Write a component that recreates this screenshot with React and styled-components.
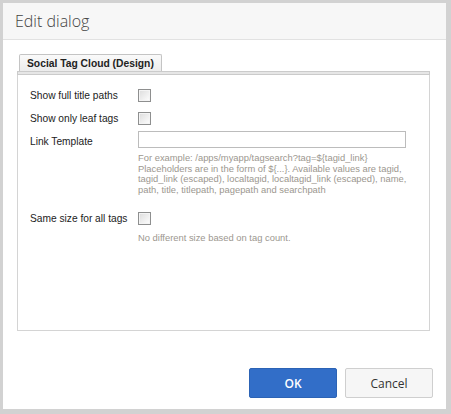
import styled, { createGlobalStyle } from "styled-components"

const GlobalStyle = createGlobalStyle`
  html, body {
    margin: 0;
    padding: 0;
    background: #fff;
  }
  body {
    font-family: "Liberation Sans", Arial, sans-serif;
    font-size: 10px;
    color: #222;
  }
`

const linkHelp = [
  "For example: /apps/myapp/tagsearch?tag=${tagid_link}",
  "Placeholders are in the form of ${...}. Available values are tagid,",
  "tagid_link (escaped), localtagid, localtagid_link (escaped), name,",
  "path, title, titlepath, pagepath and searchpath",
]

export default function App() {
  return (
    <>
      <GlobalStyle />
      <Frame>
        <Header>
          <Title>Edit dialog</Title>
        </Header>
        <Body>
          <Tab>Social Tag Cloud (Design)</Tab>
          <TabStrip />
          <Panel>
            <Row>
              <Label>Show full title paths</Label>
              <Field>
                <Checkbox />
              </Field>
            </Row>
            <Row>
              <Label>Show only leaf tags</Label>
              <Field>
                <Checkbox />
              </Field>
            </Row>
            <Row>
              <Label>Link Template</Label>
              <Field>
                <TextInput />
                <Help>
                  {linkHelp.map(line => (
                    <HelpLine key={line}>{line}</HelpLine>
                  ))}
                </Help>
              </Field>
            </Row>
            <Row>
              <Label>Same size for all tags</Label>
              <Field>
                <Checkbox />
                <Help spaced>
                  <HelpLine>No different size based on tag count.</HelpLine>
                </Help>
              </Field>
            </Row>
          </Panel>
        </Body>
        <Footer>
          <Button primary>OK</Button>
          <Button>Cancel</Button>
        </Footer>
      </Frame>
    </>
  )
}

const Frame = styled.div`
  box-sizing: border-box;
  width: 451px;
  height: 414px;
  border: 3px solid #d2d2d2;
  border-right-width: 5px;
  border-bottom-width: 5px;
  display: flex;
  flex-direction: column;
  background: #fff;
`

const Header = styled.div`
  height: 36px;
  background: #f7f7f7;
  border-bottom: 1px solid #e2e2e2;
  display: flex;
  align-items: center;
  padding-left: 12px;
`

const Title = styled.h1`
  margin: 0;
  font-family: "Open Sans", "Noto Sans", sans-serif;
  font-weight: 300;
  font-size: 16px;
  color: #444;
`

const Body = styled.div`
  padding: 14px 16px 0 14px;
`

const Tab = styled.div`
  display: inline-block;
  box-sizing: border-box;
  height: 17px;
  margin-left: 2px;
  padding: 0 7px;
  border: 1px solid #c4c4c4;
  border-bottom: none;
  border-radius: 2px 2px 0 0;
  background: linear-gradient(#fafafa, #ececec);
  font-weight: bold;
  font-size: 10.3px;
  line-height: 17px;
  color: #222;
  vertical-align: top;
`

const TabStrip = styled.div`
  box-sizing: border-box;
  height: 4px;
  border: 1px solid #cbcbcb;
  background: #e6e6e6;
`

const Panel = styled.div`
  box-sizing: border-box;
  height: 256px;
  border: 1px solid #d4d4d4;
  border-top: none;
  padding: 14px 12px 0 12px;
  display: flex;
  flex-direction: column;
  gap: 10px;
`

const Row = styled.div`
  display: flex;
  align-items: flex-start;
`

const Label = styled.div`
  width: 108px;
  flex-shrink: 0;
  font-size: 10.2px;
  line-height: 13px;
  color: #222;
`

const Field = styled.div`
  display: flex;
  flex-direction: column;
  align-items: flex-start;
  gap: 5px;
`

const Checkbox = styled.span`
  display: block;
  box-sizing: border-box;
  width: 13px;
  height: 13px;
  border: 1px solid #8e8f8f;
  box-shadow: inset 0 0 0 1px #f4f4f4;
  background: linear-gradient(135deg, #dcdcdc, #fefefe);
`

const TextInput = styled.div`
  box-sizing: border-box;
  width: 268px;
  height: 17px;
  margin-top: -4px;
  border: 1px solid #bcbcbc;
  background: #fff;
`

const Help = styled.div`
  font-size: 9.4px;
  line-height: 10.7px;
  color: #9c978f;
  margin-top: ${({ spaced }) => (spaced ? "3px" : "0")};
  margin-bottom: ${({ spaced }) => (spaced ? "0" : "6px")};
`

const HelpLine = styled.div`
  white-space: nowrap;
`

const Footer = styled.div`
  flex: 1;
  display: flex;
  justify-content: flex-end;
  align-items: flex-start;
  gap: 8px;
  padding: 37px 13px 0 0;
`

const Button = styled.button`
  width: 88px;
  height: 30px;
  border-radius: 2px;
  font-family: "Open Sans", "Noto Sans", sans-serif;
  font-size: 12px;
  font-weight: ${({ primary }) => (primary ? 600 : 400)};
  color: ${({ primary }) => (primary ? "#fff" : "#333")};
  background: ${({ primary }) => (primary ? "#326ec8" : "#f6f6f6")};
  border: 1px solid ${({ primary }) => (primary ? "#2c63b5" : "#cfcfcf")};
  cursor: pointer;
`
